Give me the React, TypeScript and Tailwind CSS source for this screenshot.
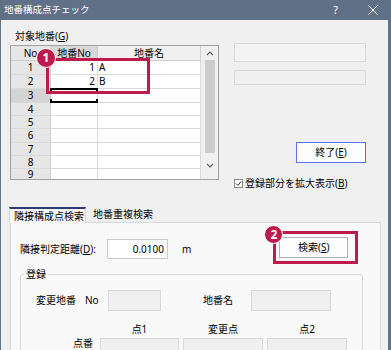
import React from 'react';

const ROW_H = ['h-[14px]', 'h-[14px]', 'h-[14px]', 'h-[13px]', 'h-[13px]', 'h-[14px]', 'h-[13px]', 'h-[13px]', 'h-[10px]'];
const CELLS: Record<number, { no: string; name: string }> = {
  1: { no: '1', name: 'A' },
  2: { no: '2', name: 'B' },
};

const Badge: React.FC<{ n: string; className: string }> = ({ n, className }) => (
  <div
    className={`absolute flex items-center justify-center rounded-full border border-white bg-[#be1a4b] text-[12px] font-bold leading-none text-white ${className}`}
  >
    {n}
  </div>
);

const Box: React.FC<{ className: string }> = ({ className }) => (
  <div className={`border border-[#d9d9d9] bg-[#f0f0f0] ${className}`} />
);

const Chevron: React.FC<{ up?: boolean }> = ({ up }) => (
  <svg width="8" height="5" viewBox="0 0 8 5" className="block">
    <path d={up ? 'M1 4 L4 1 L7 4' : 'M1 1 L4 4 L7 1'} fill="none" stroke="#606060" strokeWidth="1.2" />
  </svg>
);

function Grid() {
  return (
    <div className="relative flex h-[135px] w-[209px] border border-[#a0a0a0] bg-white">
      <div className="flex w-[190px] flex-col">
        <div className="flex h-[15px] border-b border-[#cfcfcf]">
          <div className="flex w-[40px] items-center justify-center border-r border-[#cfcfcf] bg-[#e6e6e6]">No</div>
          <div className="flex w-[47px] items-center justify-center border-r border-[#cfcfcf] bg-[#d9d9d9]">地番No</div>
          <div className="flex w-[103px] items-center justify-center border-r border-[#cfcfcf] bg-[#f0f0f0]">地番名</div>
        </div>
        {ROW_H.map((h, i) => {
          const r = i + 1;
          const c = CELLS[r];
          const last = r === 9;
          return (
            <div key={r} className={`flex ${h} ${last ? 'items-start' : 'border-b border-[#dadada]'}`}>
              <div
                className={`flex w-[40px] justify-center border-r border-[#cfcfcf] ${last ? 'h-[10px] leading-[10px]' : 'items-center'} ${r === 3 ? 'bg-[#d4d4d4]' : 'bg-[#e6e6e6]'}`}
              >
                {r}
              </div>
              <div className="relative flex h-full w-[47px] items-center justify-end border-r border-[#dadada] pr-[2px]">
                {c?.no}
                {r === 3 && (
                  <>
                    <div className="absolute -left-px -top-px h-[4px] w-[48px] border-x-2 border-t-2 border-black" />
                    <div className="absolute -bottom-px -left-px h-[4px] w-[48px] border-x-2 border-b-2 border-black" />
                  </>
                )}
              </div>
              <div className="flex h-full w-[103px] items-center border-r border-[#dadada] pl-[1px]">{c?.name}</div>
            </div>
          );
        })}
      </div>
      <div className="flex w-[17px] flex-col items-center bg-[#f0f0f0]">
        <div className="flex h-[14px] items-center">
          <Chevron up />
        </div>
        <div className="h-[93px] w-[10px] bg-[#cdcdcd]" />
        <div className="flex flex-1 items-center pb-[2px]">
          <Chevron />
        </div>
      </div>
      <div className="absolute left-[35px] top-[12px] h-[36px] w-[104px] border-[3px] border-[#be1a4b]" />
      <Badge n="1" className="left-[25px] top-[2px] h-[20px] w-[20px]" />
    </div>
  );
}

export default function App() {
  return (
    <div className="h-[350px] w-[391px] overflow-hidden bg-[#f0f0f0] font-['Noto_Sans','Noto_Sans_CJK_JP',sans-serif] text-[10px] text-black">
      <div className="flex h-[20px] items-center bg-[#5f7087] pl-[4px] text-white">
        <span className="text-[9.5px]">地番構成点チェック</span>
        <span className="ml-auto text-[11px]">?</span>
        <svg width="10" height="10" viewBox="0 0 10 10" className="ml-[30px] mr-[13px]">
          <path d="M0.5 0.5 L9.5 9.5 M9.5 0.5 L0.5 9.5" stroke="white" strokeWidth="1" />
        </svg>
      </div>

      <div className="h-[330px] border-l border-r-[3px] border-[#62738a]">
        <div className="flex h-[187px]">
          <div className="ml-[9px] w-[209px]">
            <div className="mb-[2px] pl-[5px] pt-[9px] leading-[14px]">
              対象地番(<span className="underline">G</span>)
            </div>
            <Grid />
          </div>

          <div className="ml-[15px] flex w-[132px] flex-col">
            <Box className="mt-[23px] h-[19px] bg-[#f4f4f4]" />
            <Box className="mt-[8px] h-[15px]" />
            <button className="mt-[57px] flex h-[21px] w-[70px] items-center justify-center self-end border border-[#5b70e2] bg-[#fdfdfd]">
              終了(<span className="underline">E</span>)
            </button>
            <div className="mt-[14px] flex h-[12px] items-center">
              <div className="flex h-[9px] w-[9px] items-center justify-center border border-[#8a8a8a] bg-white">
                <svg width="7" height="7" viewBox="0 0 7 7">
                  <path d="M1 3.5 L3 5.5 L6 1.5" fill="none" stroke="#333" strokeWidth="1" />
                </svg>
              </div>
              <span className="ml-[2px]">
                登録部分を拡大表示(<span className="underline">B</span>)
              </span>
            </div>
          </div>
        </div>

        <div className="ml-[8px] flex h-[15px] items-start">
          <div className="relative z-10 flex h-[16px] w-[77px] items-center border-x border-t-2 border-x-[#d9d9d9] border-t-[#2b3a68] bg-[#f9f9f9] pl-[4px]">
            隣接構成点検索
          </div>
          <div className="flex h-[15px] items-center pl-[7px]">地番重複検索</div>
        </div>

        <div className="ml-[9px] h-[140px] w-[371px] border border-[#d9d9d9] bg-[#f9f9f9]">
          <div className="mt-[14px] flex h-[22px] items-start">
            <div className="mt-[2px] flex h-[20px] w-[96px] items-center pl-[9px]">
              隣接判定距離(<span className="underline">D</span>):
            </div>
            <div className="mt-[2px] flex h-[20px] w-[61px] items-center justify-end border border-[#c9c9c9] bg-white pr-[3px]">
              0.0100
            </div>
            <div className="ml-[14px] mt-[2px] flex h-[20px] items-center">m</div>
            <div className="relative ml-[88px]">
              <button className="flex h-[21px] w-[69px] items-center justify-center border border-[#b0b0b0] bg-[#fdfdfd]">
                検索(<span className="underline">S</span>)
              </button>
              <div className="absolute -left-[6px] -top-[6px] h-[33px] w-[85px] border-[3px] border-[#be1a4b]" />
              <Badge n="2" className="-left-[15px] -top-[12px] h-[19px] w-[19px]" />
            </div>
          </div>

          <fieldset className="ml-[9px] mt-[9px] h-[100px] w-[343px] rounded-[3px] border border-[#dcdcdc]">
            <legend className="ml-[3px] px-[2px] leading-[12px]">登録</legend>
            <div className="mt-[10px] flex h-[21px] items-center">
              <div className="w-[64px] pl-[15px]">変更地番</div>
              <div className="w-[23px]">No</div>
              <Box className="h-[21px] w-[53px]" />
              <div className="ml-[42px] w-[48px]">地番名</div>
              <Box className="h-[21px] w-[80px]" />
            </div>
            <div className="mt-[12px] flex h-[12px] items-center leading-[12px]">
              <div className="w-[79px]" />
              <div className="w-[79px] text-center">点1</div>
              <div className="ml-[4px] w-[80px] text-center">変更点</div>
              <div className="ml-[4px] w-[80px] text-center">点2</div>
            </div>
            <div className="mt-[3px] flex h-[21px] items-start">
              <div className="w-[79px] pr-[7px] text-right leading-[11px]">点番</div>
              <Box className="h-[21px] w-[79px]" />
              <Box className="ml-[4px] h-[21px] w-[80px]" />
              <Box className="ml-[4px] h-[21px] w-[80px]" />
            </div>
          </fieldset>
        </div>
      </div>
    </div>
  );
}
